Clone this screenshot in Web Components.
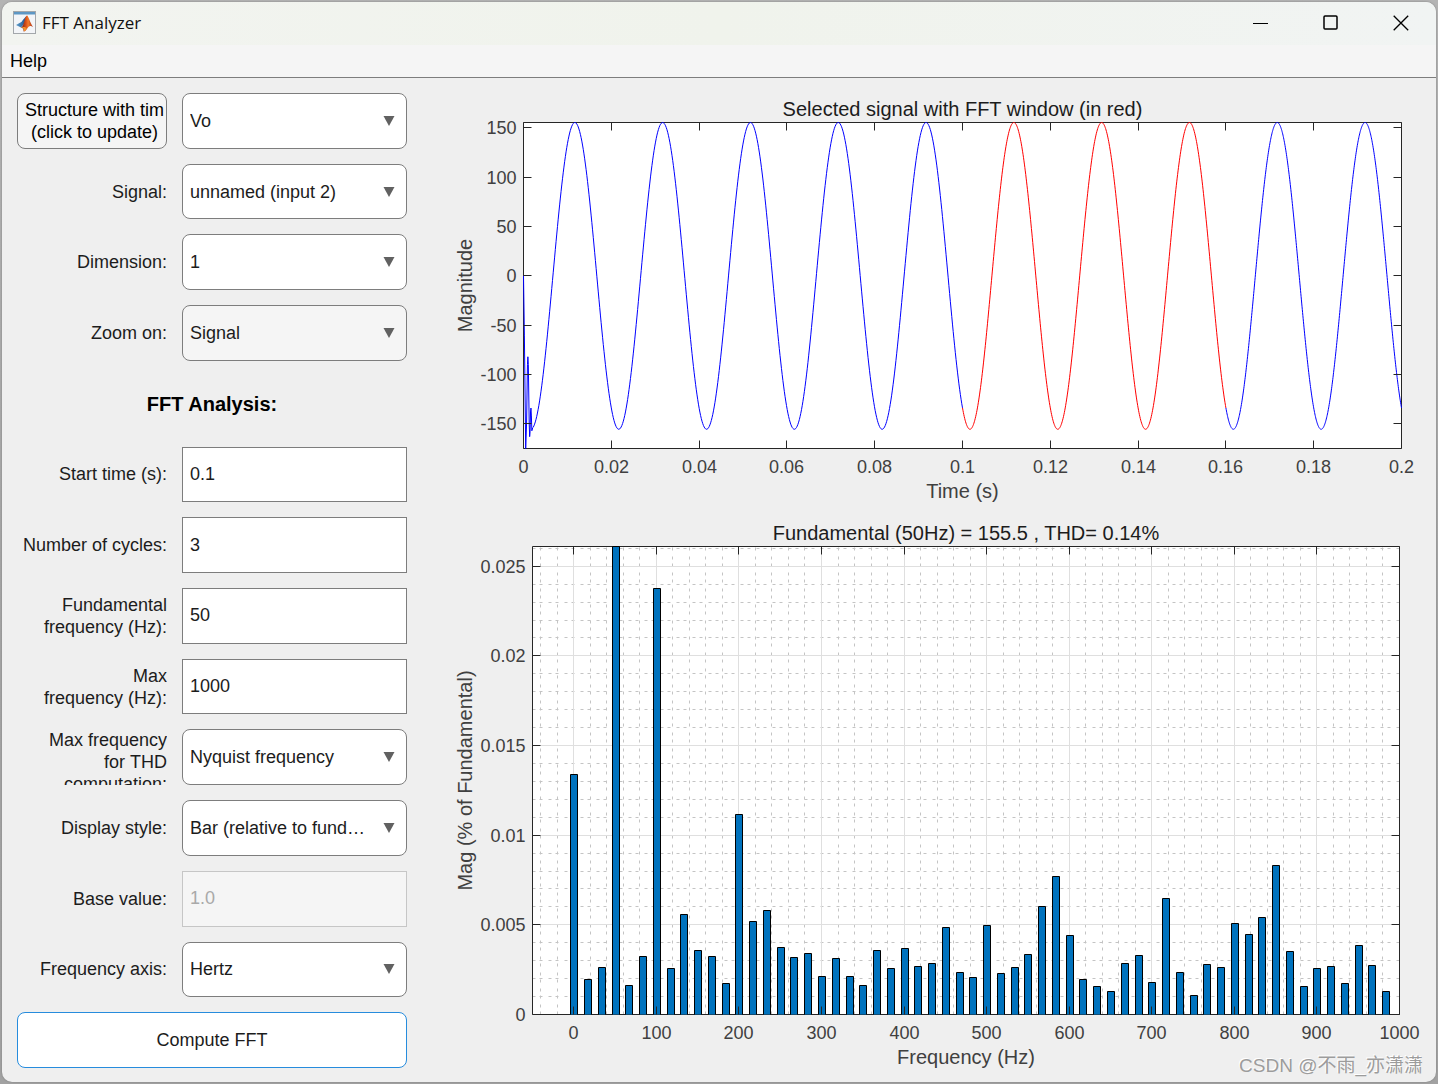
<!DOCTYPE html>
<html lang="en">
<head>
<meta charset="utf-8">
<title>FFT Analyzer</title>
<style>
  html,
  body {
    margin: 0;
    height: 100%;
  }

  body {
    background: linear-gradient(#b4b4b4, #a6a6a6 50%, #a2a2a2);
    font-family: "Liberation Sans", Arial, sans-serif;
    font-size: 18px;
    color: #1c1c1c;
  }
</style>
</head>
<body>

<analyzer-window>
  <title-bar slot="title">FFT Analyzer</title-bar>
  <menu-bar slot="menu">Help</menu-bar>

  <settings-panel slot="settings">
    <source-field></source-field>
    <select-field label="Signal:" value="unnamed (input 2)"></select-field>
    <select-field label="Dimension:" value="1"></select-field>
    <select-field label="Zoom on:" value="Signal" muted></select-field>
    <section-heading>FFT Analysis:</section-heading>
    <text-field label="Start time (s):" value="0.1"></text-field>
    <text-field label="Number of cycles:" value="3"></text-field>
    <text-field label="Fundamental frequency (Hz):" value="50"></text-field>
    <text-field label="Max frequency&nbsp;(Hz):" value="1000"></text-field>
    <select-field label="Max frequency for&nbsp;THD computation:" value="Nyquist frequency"></select-field>
    <select-field label="Display style:" value="Bar (relative to fundamental)"></select-field>
    <text-field label="Base value:" value="1.0" disabled></text-field>
    <select-field label="Frequency axis:" value="Hertz"></select-field>
    <action-button>Compute FFT</action-button>
  </settings-panel>

  <signal-plot slot="plots"></signal-plot>
  <spectrum-plot slot="plots"></spectrum-plot>

  <water-mark slot="mark">CSDN @不雨_亦潇潇</water-mark>
</analyzer-window>

<script>
/**
 * Creates a template element from a string.
 */
const makeTemplate = (html) => {
  const template = document.createElement('template')
  template.innerHTML = html
  return template
}

/**
 * Base class that clones a template into an open shadow root.
 */
class BaseElement extends HTMLElement {
  constructor (template) {
    super()

    this.attachShadow({ mode: 'open' })
      .appendChild(template.content.cloneNode(true))
  }
}

const windowTemplate = makeTemplate(`
<style>
  :host {
    display: flex;
    box-sizing: border-box;
    min-height: 100%;
    height: 100vh;
    padding: 2px;
  }

  #frame {
    position: relative;
    flex: 1;
    display: flex;
    flex-direction: column;
    border-radius: 10px;
    overflow: hidden;
    background: #efefef;
    box-shadow: 0 0 2px #777;
  }

  main {
    flex: 1;
    min-height: 0;
    display: flex;
    gap: 30px;
    padding: 15px 15px 14px;
  }

  #plots {
    flex: 1;
    min-width: 0;
    display: grid;
    grid-template-rows: 3fr 4fr;
    padding-bottom: 1px;
  }
</style>

<div id="frame">
  <slot name="title"></slot>
  <slot name="menu"></slot>
  <main>
    <slot name="settings"></slot>
    <div id="plots"><slot name="plots"></slot></div>
  </main>
  <slot name="mark"></slot>
</div>
`)

customElements.define('analyzer-window',
  class extends BaseElement {
    constructor () {
      super(windowTemplate)
    }
  }
)

const titleTemplate = makeTemplate(`
<style>
  :host {
    display: flex;
    align-items: center;
    height: 41px;
    padding: 0 0 2px 11px;
    background: linear-gradient(90deg, #f2f4f0, #f0f3ec 50%, #f1f4f3);
    font-family: "Open Sans", "Noto Sans", sans-serif;
    font-size: 17px;
    color: #111;
  }

  #name {
    flex: 1;
    padding-left: 6px;
  }

  button {
    width: 70px;
    height: 41px;
    padding: 0;
    border: 0;
    background: none;
  }

  svg {
    display: block;
  }

  button svg {
    margin: 0 auto;
  }
</style>

<svg width="23" height="23" viewBox="0 0 23 23">
  <defs>
    <linearGradient id="flame" x1="0" x2="1">
      <stop offset="0" stop-color="#6d1a12"/>
      <stop offset=".45" stop-color="#e0561a"/>
      <stop offset=".6" stop-color="#f07a2a"/>
      <stop offset="1" stop-color="#a82a14"/>
    </linearGradient>
    <linearGradient id="wing" x1="0" x2="1">
      <stop offset="0" stop-color="#5fa0cc"/>
      <stop offset="1" stop-color="#1b4d8a"/>
    </linearGradient>
  </defs>
  <rect x=".5" y=".5" width="22" height="22" fill="#f3f5f8" stroke="#a3a7ab"/>
  <path d="M1 1h21v2.500H1z" fill="#5d97c4"/>
  <path d="M3 14l4-2.200c1.500-.3 2-1.500 3-3L13.500 5l-2 7.500-3.500 4z" fill="url(#wing)"/>
  <path d="M8 16.500c2-1 2.500-4 3.500-7C12.300 7 13 4.500 14 4.500c1.300 0 3 7 6 11.500-2-1.500-3.500-1.500-5 .5-1.500 2-2.500 4-4.500 4 .3-2-.5-3.800-2.500-4z" fill="url(#flame)"/>
  <path d="M11 20.300c-.1-2-.7-3.400-2.500-4 2-.6 4-.6 5.200 1.200-.8 1.400-1.500 2.500-2.700 2.800z" fill="#f0922b"/>
</svg>
<span id="name"><slot></slot></span>
<button aria-label="Minimize">
  <svg width="16" height="16"><path d="M0 8.500h15" stroke="#000" fill="none"/></svg>
</button>
<button aria-label="Maximize">
  <svg width="16" height="16"><rect x="1" y="1" width="13" height="13" rx="1" stroke="#000" stroke-width="1.500" fill="none"/></svg>
</button>
<button aria-label="Close">
  <svg width="16" height="16"><path d="M.7.7l14.500 14.500M15.200.7L.7 15.200" stroke="#000" stroke-width="1.300" fill="none"/></svg>
</button>
`)

customElements.define('title-bar',
  class extends BaseElement {
    constructor () {
      super(titleTemplate)
    }
  }
)

const menuTemplate = makeTemplate(`
<style>
  :host {
    display: flex;
    height: 32px;
    border-bottom: 1px solid #7d7d7d;
    background: #f5f5f5;
  }

  button {
    padding: 0 8px;
    border: 0;
    background: none;
    font: inherit;
    color: #000;
  }
</style>

<button><slot></slot></button>
`)

customElements.define('menu-bar',
  class extends BaseElement {
    constructor () {
      super(menuTemplate)
    }
  }
)

const settingsTemplate = makeTemplate(`
<style>
  :host {
    flex: none;
    display: grid;
    grid-auto-rows: minmax(0, 1fr);
    gap: 15px;
    width: 390px;
  }
</style>

<slot></slot>
`)

customElements.define('settings-panel',
  class extends BaseElement {
    constructor () {
      super(settingsTemplate)
    }
  }
)

const headingTemplate = makeTemplate(`
<style>
  :host {
    display: grid;
    place-items: center;
    padding-top: 2px;
  }

  h2 {
    margin: 0;
    font-size: 20px;
    color: #000;
  }
</style>

<h2><slot></slot></h2>
`)

customElements.define('section-heading',
  class extends BaseElement {
    constructor () {
      super(headingTemplate)
    }
  }
)

const buttonTemplate = makeTemplate(`
<style>
  :host {
    display: grid;
  }

  button {
    border: 1px solid #268cdd;
    border-radius: 8px;
    background: #fff;
    font: inherit;
    color: inherit;
  }
</style>

<button><slot></slot></button>
`)

customElements.define('action-button',
  class extends BaseElement {
    constructor () {
      super(buttonTemplate)
    }
  }
)

// Styles shared by every row that has a label and a control.
const fieldStyles = `
  :host {
    display: grid;
    grid-template-columns: 150px 1fr;
    grid-template-rows: minmax(0, 1fr);
    column-gap: 15px;
    line-height: 22px;
  }

  label {
    align-self: center;
    max-height: 100%;
    overflow: hidden;
    text-align: right;
  }

  input,
  select {
    box-sizing: border-box;
    width: 100%;
    height: 100%;
    margin: 0;
    padding: 0 7px;
    border: 1px solid #7d7d7d;
    border-radius: 0;
    background: #fff;
    font: inherit;
    color: inherit;
  }

  input:disabled {
    border-color: #c6c6c6;
    background: #f5f5f5;
    color: #a9a9a9;
  }

  select {
    appearance: none;
    padding-right: 40px;
    border-radius: 8px;
    text-overflow: ellipsis;
  }

  .box {
    display: grid;
    align-items: center;
  }

  .box > * {
    grid-area: 1 / 1;
  }

  .box svg {
    justify-self: end;
    margin-right: 12px;
    pointer-events: none;
  }
`

const arrow = '<svg width="12" height="10" viewBox="0 0 12 10"><path d="M.5 0h11L6 10z" fill="#616161"/></svg>'

const selectTemplate = makeTemplate(`
<style>
  ${fieldStyles}

  :host([muted]) select {
    background: #f5f5f5;
  }
</style>

<label for="control"></label>
<div class="box">
  <select id="control"></select>
  ${arrow}
</div>
`)

customElements.define('select-field',
  /**
   * A labelled drop-down.
   */
  class extends BaseElement {
    constructor () {
      super(selectTemplate)
    }

    connectedCallback () {
      this.shadowRoot.querySelector('label').textContent = this.getAttribute('label')
      this.shadowRoot.querySelector('select')
        .replaceChildren(new Option(this.getAttribute('value')))
    }
  }
)

const textTemplate = makeTemplate(`
<style>${fieldStyles}</style>

<label for="control"></label>
<input id="control" type="text">
`)

customElements.define('text-field',
  /**
   * A labelled text box.
   */
  class extends BaseElement {
    constructor () {
      super(textTemplate)
    }

    connectedCallback () {
      const input = this.shadowRoot.querySelector('input')

      this.shadowRoot.querySelector('label').textContent = this.getAttribute('label')
      input.value = this.getAttribute('value')
      input.disabled = this.hasAttribute('disabled')
    }
  }
)

const sourceTemplate = makeTemplate(`
<style>
  ${fieldStyles}

  button {
    min-width: 0;
    padding: 0 2px 0 7px;
    border: 1px solid #7d7d7d;
    border-radius: 8px;
    background: #f5f5f5;
    font: inherit;
    color: #000;
  }

  button span {
    display: block;
    overflow: hidden;
    white-space: pre;
  }
</style>

<button><span>Structure with time
(click to update)</span></button>
<div class="box">
  <select aria-label="Structure"><option>Vo</option></select>
  ${arrow}
</div>
`)

customElements.define('source-field',
  class extends BaseElement {
    constructor () {
      super(sourceTemplate)
    }
  }
)

const plotTemplate = makeTemplate(`
<style>
  :host {
    display: block;
    min-width: 0;
    min-height: 0;
  }

  svg {
    display: block;
    overflow: visible;
  }

  text {
    font-size: 18px;
    fill: #404040;
  }

  text.caption {
    font-size: 20px;
  }

  text.title {
    fill: #1c1c1c;
  }

  .area {
    fill: #fff;
  }

  .axis {
    fill: none;
    stroke: #262626;
  }

  .grid {
    fill: none;
    stroke: #dfdfdf;
  }

  .minor {
    fill: none;
    stroke: #c4c4c4;
    stroke-dasharray: 3 4 3 6;
  }

  .bar {
    fill: #0072bd;
    stroke: #000;
  }

  .line {
    fill: none;
    stroke: #00f;
  }

  .selected {
    stroke: #f00;
  }
</style>

<svg role="img"></svg>
`)

/**
 * Base class of the two plots: draws the box, ticks and texts.
 */
class PlotElement extends BaseElement {
  constructor () {
    super(plotTemplate)

    this.svg = this.shadowRoot.querySelector('svg')
    this.observer = new ResizeObserver(() => this.render())
  }

  connectedCallback () {
    this.observer.observe(this)
    this.render()
  }

  disconnectedCallback () {
    this.observer.disconnect()
  }

  x (value) {
    const [min, max] = this.options.xRange
    return this.left + (value - min) / (max - min) * (this.right - this.left)
  }

  y (value) {
    const [min, max] = this.options.yRange
    return this.bottom - (value - min) / (max - min) * (this.bottom - this.top)
  }

  // Centre of the pixel, so that a line of one pixel stays sharp.
  snap (value) {
    return Math.floor(value) + 0.5
  }

  render () {
    const { margin, xTicks, yTicks, title, xLabel, yLabel } = this.options
    const width = this.clientWidth
    const height = this.clientHeight

    this.left = margin.left + 0.5
    this.right = width - margin.right - 0.5
    this.top = margin.top + 0.5
    this.bottom = height - margin.bottom - 0.5

    const { left, right, top, bottom } = this
    const centerX = (left + right) / 2
    const centerY = (top + bottom) / 2
    let ticks = ''
    let texts = ''

    for (const value of xTicks) {
      const x = this.snap(this.x(value))
      ticks += `M${x} ${bottom}v-8M${x} ${top}v8`
      texts += `<text x="${x}" y="${bottom + 24}" text-anchor="middle">${value}</text>`
    }

    for (const value of yTicks) {
      const y = this.snap(this.y(value))
      ticks += `M${left} ${y}h8M${right} ${y}h-8`
      texts += `<text x="${left - 7}" y="${y + 6}" text-anchor="end">${value}</text>`
    }

    this.svg.setAttribute('width', width)
    this.svg.setAttribute('height', height)
    this.svg.setAttribute('aria-label', title)
    this.svg.innerHTML = `
      <rect class="area" x="${left}" y="${top}" width="${right - left}" height="${bottom - top}"/>
      ${this.drawGrid()}
      <path class="axis" d="M${left} ${top}H${right}V${bottom}H${left}z"/>
      ${this.drawData()}
      <path class="axis" d="${ticks}"/>
      ${texts}
      <text class="caption title" x="${centerX}" y="${top - 7}" text-anchor="middle">${title}</text>
      <text class="caption" x="${centerX}" y="${bottom + 49}" text-anchor="middle">${xLabel}</text>
      <text class="caption" transform="translate(35 ${centerY}) rotate(-90)" text-anchor="middle">${yLabel}</text>`
  }

  drawGrid () {
    return ''
  }
}

customElements.define('signal-plot',
  /**
   * The signal over time, with the analysed cycles in red.
   */
  class extends PlotElement {
    options = {
      title: 'Selected signal with FFT window (in red)',
      xLabel: 'Time (s)',
      yLabel: 'Magnitude',
      xRange: [0, 0.2],
      yRange: [-175, 155.5],
      xTicks: [0, 0.02, 0.04, 0.06, 0.08, 0.1, 0.12, 0.14, 0.16, 0.18, 0.2],
      yTicks: [150, 100, 50, 0, -50, -100, -150],
      margin: { top: 29, right: 19, bottom: 61, left: 86 }
    }

    // Start-up ringing of the signal, as [time, value].
    transient = [
      [0, 0], [0.0002, -60], [0.0005, -175], [0.0007, -150], [0.0009, -90], [0.001, -82],
      [0.0011, -90], [0.0013, -150], [0.0014, -163], [0.0015, -158], [0.0016, -138],
      [0.0017, -134], [0.0018, -142], [0.0019, -157], [0.0021, -154]
    ]

    trace (from, to, start = []) {
      const points = [...start]

      for (let i = 0; i <= 600; i++) {
        const time = from + (to - from) * i / 600
        points.push([time, -155.5 * Math.cos(2 * Math.PI * 50 * (time - 0.0017))])
      }

      return points.map(([t, v]) => `${this.x(t).toFixed(2)},${this.y(v).toFixed(2)}`).join(' ')
    }

    drawData () {
      return `
        <polyline class="line" points="${this.trace(0.0022, 0.1, this.transient)}"/>
        <polyline class="line selected" points="${this.trace(0.1, 0.16)}"/>
        <polyline class="line" points="${this.trace(0.16, 0.2)}"/>`
    }
  }
)

customElements.define('spectrum-plot',
  /**
   * The magnitude of each frequency, in percent of the fundamental.
   */
  class extends PlotElement {
    options = {
      title: 'Fundamental (50Hz) = 155.5 , THD= 0.14%',
      xLabel: 'Frequency (Hz)',
      yLabel: 'Mag (% of Fundamental)',
      xRange: [-50, 1000],
      yRange: [0, 0.0261],
      xTicks: [0, 100, 200, 300, 400, 500, 600, 700, 800, 900, 1000],
      yTicks: [0, 0.005, 0.01, 0.015, 0.02, 0.025],
      margin: { top: 36, right: 21, bottom: 52, left: 95 }
    }

    // One magnitude for every 1000 / 60 Hz, in thousandths of a percent.
    magnitudes = [
      13.41, 1.95, 2.62, 100000, 1.62, 3.23, 23.73, 2.56, 5.58, 3.57,
      3.23, 1.73, 11.15, 5.19, 5.8, 3.74, 3.18, 3.4, 2.12, 3.12,
      2.12, 1.62, 3.57, 2.56, 3.68, 2.68, 2.84, 4.85, 2.34, 2.06,
      4.96, 2.29, 2.62, 3.34, 6.02, 7.69, 4.4, 1.95, 1.56, 1.28,
      2.84, 3.29, 1.78, 6.47, 2.34, 1.06, 2.79, 2.62, 5.07, 4.46,
      5.41, 8.31, 3.51, 1.56, 2.56, 2.68, 1.73, 3.85, 2.73, 1.28
    ]

    drawGrid () {
      const { left, right, top, bottom } = this
      let major = ''
      let minor = ''

      for (let f = -40; f < 1000; f += 20) {
        const line = `M${this.snap(this.x(f))} ${bottom}V${top}`
        if (f % 100) {
          minor += line
        } else {
          major += line
        }
      }

      for (let i = 1; i <= 26; i++) {
        const line = `M${left} ${this.snap(this.y(i / 1000))}H${right}`
        if (i % 5) {
          minor += line
        } else {
          major += line
        }
      }

      return `<path class="minor" d="${minor}"/><path class="grid" d="${major}"/>`
    }

    drawData () {
      return this.magnitudes.map((magnitude, i) => {
        const x = this.snap(this.x(i * 1000 / 60) - 3)
        const y = Math.max(this.snap(this.y(magnitude / 1000)), this.top)
        return `<path class="bar" d="M${x} ${this.bottom}V${y}h7V${this.bottom}"/>`
      }).join('')
    }
  }
)

const markTemplate = makeTemplate(`
<style>
  :host {
    position: absolute;
    right: 13px;
    bottom: 3px;
    font-family: "Liberation Sans", "Noto Sans CJK SC", sans-serif;
    font-size: 19px;
    line-height: 26px;
    color: #9c9c9c;
    text-shadow: -1px -1px 0 #fff;
  }
</style>

<slot></slot>
`)

customElements.define('water-mark',
  class extends BaseElement {
    constructor () {
      super(markTemplate)
    }
  }
)
</script>
</body>
</html>
